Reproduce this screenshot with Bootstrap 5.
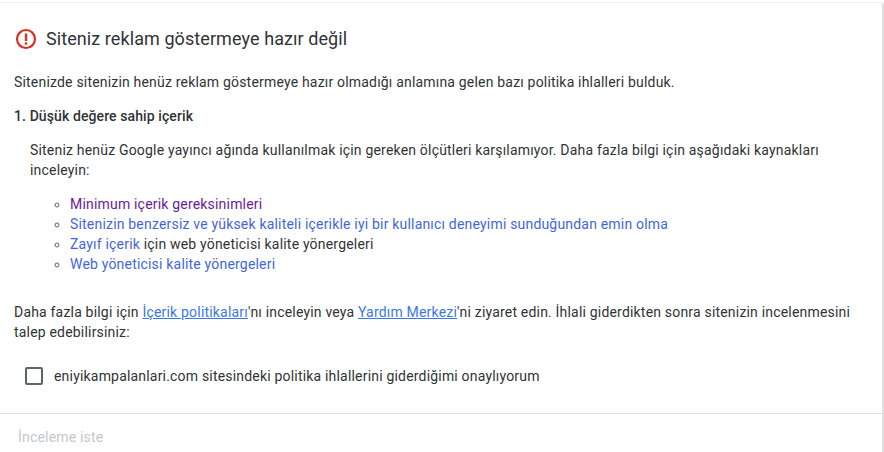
<!DOCTYPE html>
<html lang="tr"><head><meta charset="utf-8">
<link href="https://cdn.jsdelivr.net/npm/bootstrap@5.3.0/dist/css/bootstrap.min.css" rel="stylesheet">
<style>
html,body{height:452px;overflow:hidden;background:#fff}
body{font-family:Roboto,"Liberation Sans",sans-serif;font-size:14px;line-height:20px;color:#303336;letter-spacing:.19px}
.panel{width:884px;height:450px;margin-top:2px;border-right:2px solid #e0e0e0;border-top:1px solid #efefef;border-top-right-radius:3px;overflow:hidden}
.head-title{font-size:18px;line-height:24px;font-weight:400;color:#303336;margin:0;letter-spacing:.08px}
.head-row{padding:24px 0 0 15px;gap:9px}
.intro{margin:21px 0 0 14px}
.sub{margin:14px 0 0 14px;font-weight:500;letter-spacing:.1px}
.desc{margin:14px 40px 0 30px}
.links{margin:14px 0 0 0;padding-left:70px;list-style:circle}
.links li::marker{color:#5f6368}
a.lnk{color:#4466dd;text-decoration:none}
a.vis{color:#6a1b9a;text-decoration:none}
a.und{color:#3b78e7;text-decoration:underline}
.more{margin:28px 20px 0 14px}
.agree{margin:24px 0 0 25px;gap:11px}
.box{width:18px;height:18px;border:2px solid #5f6368;border-radius:2px}
.foot{margin-top:27px;border-top:1px solid #e0e0e0;padding:13px 0 0 18px;color:#c4c7cb}
</style></head><body>
<div class="panel">
<div class="d-flex align-items-center head-row">
<svg width="22" height="22" viewBox="0 0 22 22" fill="none"><circle cx="11" cy="11" r="9" stroke="#d93025" stroke-width="2.2"/><rect x="9.8" y="5.5" width="2.4" height="7.5" fill="#d93025"/><rect x="9.8" y="14.3" width="2.4" height="2.4" fill="#d93025"/></svg>
<h1 class="head-title">Siteniz reklam göstermeye hazır değil</h1>
</div>
<p class="intro">Sitenizde sitenizin henüz reklam göstermeye hazır olmadığı anlamına gelen bazı politika ihlalleri bulduk.</p>
<p class="sub">1. Düşük değere sahip içerik</p>
<p class="desc">Siteniz henüz Google yayıncı ağında kullanılmak için gereken ölçütleri karşılamıyor. Daha fazla bilgi için aşağıdaki kaynakları inceleyin:</p>
<ul class="links">
<li><a class="vis" href="#">Minimum içerik gereksinimleri</a></li>
<li><a class="lnk" href="#">Sitenizin benzersiz ve yüksek kaliteli içerikle iyi bir kullanıcı deneyimi sunduğundan emin olma</a></li>
<li><a class="lnk" href="#">Zayıf içerik</a> için web yöneticisi kalite yönergeleri</li>
<li><a class="lnk" href="#">Web yöneticisi kalite yönergeleri</a></li>
</ul>
<p class="more">Daha fazla bilgi için <a class="und" href="#">İçerik politikaları</a>'nı inceleyin veya <a class="und" href="#">Yardım Merkezi</a>'ni ziyaret edin. İhlali giderdikten sonra sitenizin incelenmesini talep edebilirsiniz:</p>
<div class="d-flex align-items-center agree"><span class="box"></span><span>eniyikampalanlari.com sitesindeki politika ihlallerini giderdiğimi onaylıyorum</span></div>
<div class="foot">İnceleme iste</div>
</div>
</body></html>
